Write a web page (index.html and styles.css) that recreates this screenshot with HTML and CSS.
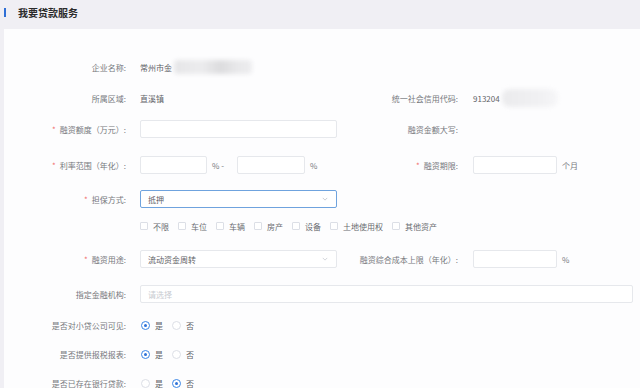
FILE: index.html
```html
<!DOCTYPE html>
<html lang="zh-CN">
<head>
<meta charset="utf-8">
<title>我要贷款服务</title>
<link rel="stylesheet" href="styles.css">
</head>
<body>
<div class="page">
  <div class="header">
    <span class="bar"></span>
    <h1 class="title">我要贷款服务</h1>
  </div>
  <div class="panel">
    <div class="row">
      <span class="lbl">企业名称:</span>
      <div class="left"><span class="val">常州市金</span><span class="blur blur-name"></span></div>
    </div>
    <div class="row g13">
      <span class="lbl">所属区域:</span>
      <div class="left"><span class="val">直溪镇</span></div>
      <span class="rlbl">统一社会信用代码:</span>
      <span class="val">913204</span><span class="blur blur-code"></span>
    </div>
    <div class="row g13">
      <span class="lbl"><i class="req">*</i>融资额度（万元）:</span>
      <div class="left"><span class="input w197"></span></div>
      <span class="rlbl">融资金额大写:</span>
    </div>
    <div class="row g18">
      <span class="lbl"><i class="req">*</i>利率范围（年化）:</span>
      <div class="left">
        <span class="input w67"></span><span class="unit sep">% -</span><span class="input w68"></span><span class="unit">%</span>
      </div>
      <span class="rlbl"><i class="req">*</i>融资期限:</span>
      <span class="input w84"></span><span class="unit">个月</span>
    </div>
    <div class="row g16">
      <span class="lbl"><i class="req">*</i>担保方式:</span>
      <div class="select focus w197"><span class="val">抵押</span>
        <svg class="chev" viewBox="0 0 8 5" width="6" height="4"><polyline points="1,1 4,4 7,1" fill="none" stroke="#b8bcc4" stroke-width="1"/></svg>
      </div>
    </div>
    <div class="row g9">
      <span class="lbl"></span>
      <div class="checks">
        <span class="check"><span class="box"></span>不限</span>
        <span class="check"><span class="box"></span>车位</span>
        <span class="check"><span class="box"></span>车辆</span>
        <span class="check"><span class="box"></span>房产</span>
        <span class="check"><span class="box"></span>设备</span>
        <span class="check"><span class="box"></span>土地使用权</span>
        <span class="check"><span class="box"></span>其他资产</span>
      </div>
    </div>
    <div class="row g15">
      <span class="lbl"><i class="req">*</i>融资用途:</span>
      <div class="left"><div class="select w197"><span class="val">流动资金周转</span>
        <svg class="chev" viewBox="0 0 8 5" width="6" height="4"><polyline points="1,1 4,4 7,1" fill="none" stroke="#c4c8cf" stroke-width="1"/></svg>
      </div></div>
      <span class="rlbl">融资综合成本上限（年化）:</span>
      <span class="input w84"></span><span class="unit">%</span>
    </div>
    <div class="row g17">
      <span class="lbl">指定金融机构:</span>
      <span class="input wide"><span class="ph">请选择</span></span>
    </div>
    <div class="row g13">
      <span class="lbl">是否对小贷公司可见:</span>
      <span class="radio on"></span><span class="rtxt">是</span>
      <span class="radio"></span><span class="rtxt">否</span>
    </div>
    <div class="row g11">
      <span class="lbl">是否提供报税报表:</span>
      <span class="radio on"></span><span class="rtxt">是</span>
      <span class="radio"></span><span class="rtxt">否</span>
    </div>
    <div class="row g11">
      <span class="lbl">是否已存在银行贷款:</span>
      <span class="radio"></span><span class="rtxt">是</span>
      <span class="radio on"></span><span class="rtxt">否</span>
    </div>
  </div>
</div>
</body>
</html>
```

FILE: styles.css
```css
* { box-sizing: border-box; }
html, body {
  margin: 0;
  padding: 0;
  background: #f0eff4;
  font-family: "Noto Sans CJK SC", "Noto Sans", sans-serif;
  font-size: 8px;
  color: #6e7075;
  width: 640px;
  height: 388px;
  overflow: hidden;
}
.page { width: 640px; height: 388px; display: flex; flex-direction: column; }
.header {
  height: 29px;
  display: flex;
  align-items: center;
  padding-left: 4px;
  padding-bottom: 4px;
  flex: none;
}
.bar { width: 2px; height: 9px; background: #2f6fd6; margin-right: 12px; }
.title { margin: 0; font-size: 10px; font-weight: bold; color: #2b2b2b; letter-spacing: 0; }
.panel {
  flex: 1;
  margin-left: 4px;
  background: #fdfdfe;
  padding-top: 29px;
  display: flex;
  flex-direction: column;
}
.row { display: flex; align-items: center; height: 18px; flex: none; }
.g9 { margin-top: 9px; }
.g11 { margin-top: 11px; }
.g13 { margin-top: 13px; }
.g15 { margin-top: 15px; }
.g16 { margin-top: 16px; }
.g17 { margin-top: 17px; }
.g18 { margin-top: 18px; }
.lbl {
  width: 122px;
  flex: none;
  text-align: right;
  margin-right: 14px;
  color: #76787d;
  white-space: nowrap;
}
.rlbl {
  width: 118px;
  flex: none;
  text-align: right;
  margin-right: 15px;
  color: #76787d;
  white-space: nowrap;
}
.req { font-style: normal; color: #f26d6d; margin-right: 4px; }
.left { width: 200px; flex: none; display: flex; align-items: center; }
.val { color: #5f6267; white-space: nowrap; }
.blur { display: inline-block; border-radius: 4px; filter: blur(2px); }
.blur-name {
  width: 78px; height: 14px; margin-left: 2px;
  background: linear-gradient(90deg, #e6e6e8 0%, #ececee 35%, #dcdcde 60%, #e8e8ea 80%, #ededef 100%);
}
.blur-code {
  width: 56px; height: 18px; margin-left: 2px; border-radius: 8px;
  background: linear-gradient(90deg, #ebebed 0%, #f1f1f3 70%, #f6f6f8 100%);
}
.input {
  display: inline-flex;
  align-items: center;
  height: 18px;
  border: 1px solid #e6e8ec;
  border-radius: 2px;
  background: #fff;
  flex: none;
}
.w197 { width: 197px; }
.w67 { width: 67px; }
.w68 { width: 68px; }
.w84 { width: 84px; }
.wide { width: 493px; padding-left: 7px; }
.ph { color: #c8cbd1; }
.unit { margin-left: 5px; color: #76787d; white-space: nowrap; }
.sep { width: 25px; }
.select {
  display: flex;
  align-items: center;
  justify-content: space-between;
  height: 18px;
  border: 1px solid #e6e8ec;
  border-radius: 2px;
  background: #fff;
  padding: 0 8px 0 7px;
  flex: none;
}
.select.focus { border-color: #6fa3de; }
.chev { display: block; }
.checks { display: flex; align-items: center; }
.check { display: flex; align-items: center; margin-right: 9px; color: #6a6c71; white-space: nowrap; }
.box {
  width: 8px; height: 8px;
  border: 1px solid #dcdfe6;
  border-radius: 1px;
  background: #fff;
  margin-right: 5px;
}
.radio {
  width: 9px; height: 9px;
  border-radius: 50%;
  border: 1px solid #dcdfe6;
  background: #fff;
  flex: none;
  margin-left: 1px;
  margin-right: 5px;
  position: relative;
}
.radio.on { border-color: #3a86e6; }
.radio.on::after {
  content: "";
  position: absolute;
  left: 2px; top: 2px;
  width: 3px; height: 3px;
  border-radius: 50%;
  background: #2f73d8;
}
.rtxt { color: #5f6267; margin-right: 8px; }
```
